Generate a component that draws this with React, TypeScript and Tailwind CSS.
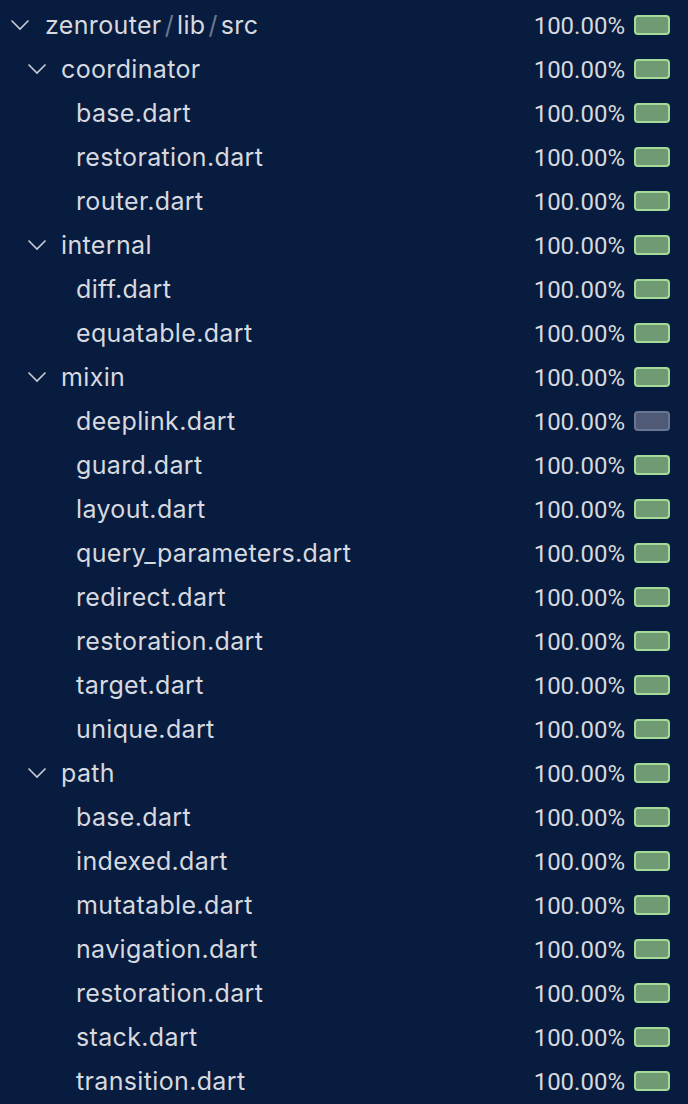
type Row = { name: string; depth: number; folder?: boolean; empty?: boolean }

const rows: Row[] = [
  { name: "coordinator", depth: 1, folder: true },
  { name: "base.dart", depth: 2 },
  { name: "restoration.dart", depth: 2 },
  { name: "router.dart", depth: 2 },
  { name: "internal", depth: 1, folder: true },
  { name: "diff.dart", depth: 2 },
  { name: "equatable.dart", depth: 2 },
  { name: "mixin", depth: 1, folder: true },
  { name: "deeplink.dart", depth: 2, empty: true },
  { name: "guard.dart", depth: 2 },
  { name: "layout.dart", depth: 2 },
  { name: "query_parameters.dart", depth: 2 },
  { name: "redirect.dart", depth: 2 },
  { name: "restoration.dart", depth: 2 },
  { name: "target.dart", depth: 2 },
  { name: "unique.dart", depth: 2 },
  { name: "path", depth: 1, folder: true },
  { name: "base.dart", depth: 2 },
  { name: "indexed.dart", depth: 2 },
  { name: "mutatable.dart", depth: 2 },
  { name: "navigation.dart", depth: 2 },
  { name: "restoration.dart", depth: 2 },
  { name: "stack.dart", depth: 2 },
  { name: "transition.dart", depth: 2 },
]

function Chevron({ className }: { className: string }) {
  return (
    <svg width="20" height="12" viewBox="0 0 20 12" className={className} fill="none">
      <polyline points="1.5,1.5 10,10 18.5,1.5" stroke="#c9ccd3" strokeWidth="1.6" />
    </svg>
  )
}

function Coverage({ empty }: { empty?: boolean }) {
  return (
    <div className="flex items-center gap-[9px]">
      <span className="pt-[2px]" style={{ fontFamily: "Roboto, sans-serif" }}>
        100.00%
      </span>
      <div
        className={
          empty
            ? "w-[36px] h-[20px] rounded-[4px] border-2 border-[#6a7591] bg-[#4f5b76]"
            : "w-[36px] h-[20px] rounded-[4px] border-2 border-[#a3dc99] bg-[#6f9a73]"
        }
      />
    </div>
  )
}

export default function App() {
  return (
    <div
      className="w-[688px] h-[1104px] bg-[#081c3f] text-[#d6d9df] text-[24px] pt-[3px] pr-[18px] overflow-hidden"
      style={{ fontFamily: "Inter, 'Noto Sans', sans-serif" }}
    >
      {/* root */}
      <div className="h-[44px] flex items-center justify-between">
        <div className="flex items-center text-[25px] tracking-[0.35px]">
          <Chevron className="ml-[10px] mr-[15px]" />
          <span className="pt-[2px]">zenrouter</span>
          <span className="pt-[2px] mx-[3px] text-[#6d7890]">/</span>
          <span className="pt-[2px]">lib</span>
          <span className="pt-[2px] mx-[3px] text-[#6d7890]">/</span>
          <span className="pt-[2px]">src</span>
        </div>
        <Coverage />
      </div>

      {rows.map((row, i) => (
        <div key={i} className="h-[44px] flex items-center justify-between">
          {row.folder ? (
            <div className="flex items-center text-[25px] tracking-[0.35px]">
              <Chevron className="ml-[27px] mr-[14px]" />
              <span className="pt-[2px]">{row.name}</span>
            </div>
          ) : (
            <span className="pl-[76px] pt-[2px] text-[25px] tracking-[0.35px]">{row.name}</span>
          )}
          <Coverage empty={row.empty} />
        </div>
      ))}
    </div>
  )
}
